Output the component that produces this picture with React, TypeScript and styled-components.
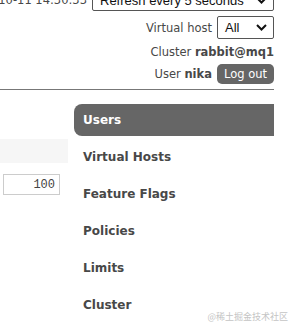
import styled, { createGlobalStyle } from 'styled-components'

const GlobalStyle = createGlobalStyle`
  html, body {
    margin: 0;
    padding: 0;
    background: #fff;
    overflow: hidden;
  }
  body {
    font-family: 'DejaVu Sans', Verdana, sans-serif;
    font-size: 11.5px;
    color: #484848;
  }
`

const Page = styled.div`
  position: relative;
  width: 297px;
  height: 332px;
  padding-right: 23px;
  box-sizing: border-box;
  overflow: hidden;
`

const Header = styled.header`
  display: flex;
  flex-direction: column;
  align-items: flex-end;
  margin-top: -11px;
  padding-bottom: 5px;
  border-bottom: 1px solid #777;
`

const HeaderRow = styled.div<{ $h: number; $top?: number }>`
  display: flex;
  align-items: center;
  justify-content: flex-end;
  gap: 5px;
  height: ${({ $h }) => $h}px;
  margin-top: ${({ $top }) => $top ?? 0}px;
  white-space: nowrap;
  flex-shrink: 0;
`

const Label = styled.span`
  flex-shrink: 0;
`

const Strong = styled.b`
  font-weight: bold;
`

const FakeSelect = styled.div<{ $w: number }>`
  display: flex;
  align-items: center;
  justify-content: space-between;
  box-sizing: border-box;
  width: ${({ $w }) => $w}px;
  height: 100%;
  padding: 0 6px 0 7px;
  border: 1px solid #555;
  border-radius: 2px;
  background: #fff;
  color: #111;
  font-family: 'Liberation Sans', Arial, sans-serif;
  font-size: 13px;
  flex-shrink: 0;
`

const LogoutButton = styled.button`
  height: 20px;
  padding: 0 7px;
  border: none;
  border-radius: 5px;
  background: #666;
  color: #fff;
  font: inherit;
  cursor: pointer;
`

const Main = styled.div`
  display: flex;
  gap: 6px;
`

const LeftPane = styled.div`
  display: flex;
  flex-direction: column;
  width: 68px;
  padding-top: 49px;
  flex-shrink: 0;
`

const Band = styled.div`
  height: 24px;
  background: #f6f6f6;
`

const NumberInput = styled.input`
  box-sizing: border-box;
  width: 57px;
  height: 21px;
  margin: 11px 0 0 3px;
  padding: 0 4px 0 0;
  border: 1px solid #ccc;
  text-align: right;
  font-family: 'Liberation Mono', monospace;
  font-size: 12px;
  color: #444;
  outline: none;
`

const Menu = styled.ul`
  display: flex;
  flex-direction: column;
  gap: 5px;
  flex: 1;
  margin: 14px 0 0;
  padding: 0;
  list-style: none;
`

const MenuItem = styled.li<{ $active?: boolean }>`
  display: flex;
  align-items: center;
  height: 32px;
  padding-left: 9px;
  border-radius: 8px 0 0 8px;
  background: ${({ $active }) => ($active ? '#666' : 'transparent')};
  color: ${({ $active }) => ($active ? '#fff' : '#484848')};
  font-size: 12px;
  font-weight: bold;
`

const Watermark = styled.div`
  position: absolute;
  right: 9px;
  bottom: 9px;
  font-family: 'Noto Sans CJK SC', sans-serif;
  font-size: 9px;
  color: #c4c4c4;
`

const Chevron = () => (
  <svg width="11" height="7" viewBox="0 0 11 7">
    <path d="M1 1 L5.5 5.5 L10 1" fill="none" stroke="#111" strokeWidth="2" />
  </svg>
)

const menu = [
  'Users',
  'Virtual Hosts',
  'Feature Flags',
  'Policies',
  'Limits',
  'Cluster',
]

export default function App() {
  return (
    <Page>
      <GlobalStyle />
      <Header>
        <HeaderRow $h={22}>
          <Label>Last update: 2023-10-11 14:30:33</Label>
          <FakeSelect $w={182}>
            Refresh every 5 seconds
            <Chevron />
          </FakeSelect>
        </HeaderRow>
        <HeaderRow $h={23} $top={5}>
          <Label>Virtual host</Label>
          <FakeSelect $w={57}>
            All
            <Chevron />
          </FakeSelect>
        </HeaderRow>
        <HeaderRow $h={20} $top={3}>
          <Label>
            Cluster <Strong>rabbit@mq1</Strong>
          </Label>
        </HeaderRow>
        <HeaderRow $h={20} $top={2}>
          <Label>
            User <Strong>nika</Strong>
          </Label>
          <LogoutButton>Log out</LogoutButton>
        </HeaderRow>
      </Header>
      <Main>
        <LeftPane>
          <Band />
          <NumberInput defaultValue="100" />
        </LeftPane>
        <Menu>
          {menu.map((item, i) => (
            <MenuItem key={item} $active={i === 0}>
              {item}
            </MenuItem>
          ))}
        </Menu>
      </Main>
      <Watermark>@稀土掘金技术社区</Watermark>
    </Page>
  )
}
